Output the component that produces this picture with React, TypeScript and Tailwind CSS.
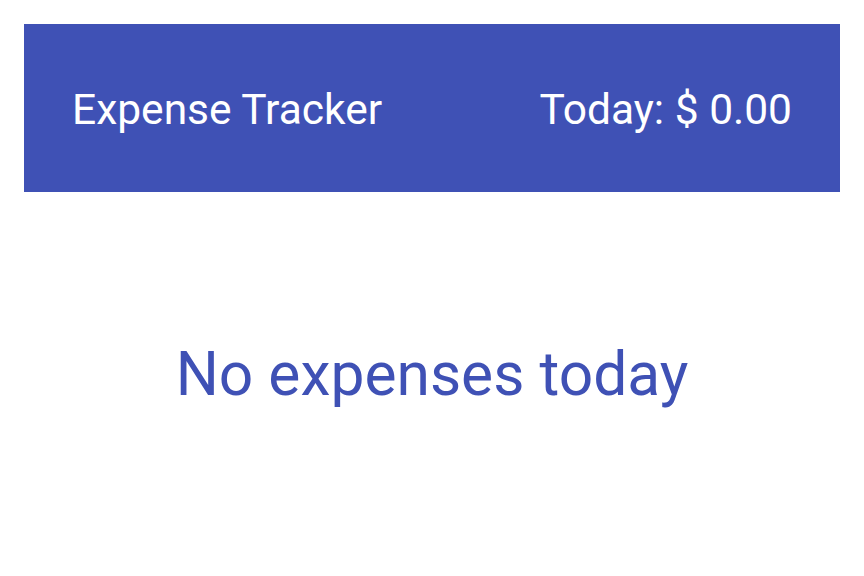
export default function App() {
  return (
    <div className="min-h-screen bg-white p-6 font-['Roboto',sans-serif]">
      {/* App bar */}
      <header className="flex h-[168px] items-center justify-between bg-[#3f51b5] px-12 pt-1 text-[42.5px] leading-normal text-white">
        <span>Expense Tracker</span>
        <span>Today: $ 0.00</span>
      </header>

      {/* Empty state */}
      <p className="mt-[138px] text-center text-[60.5px] leading-normal text-[#3f51b5]">
        No expenses today
      </p>
    </div>
  );
}
